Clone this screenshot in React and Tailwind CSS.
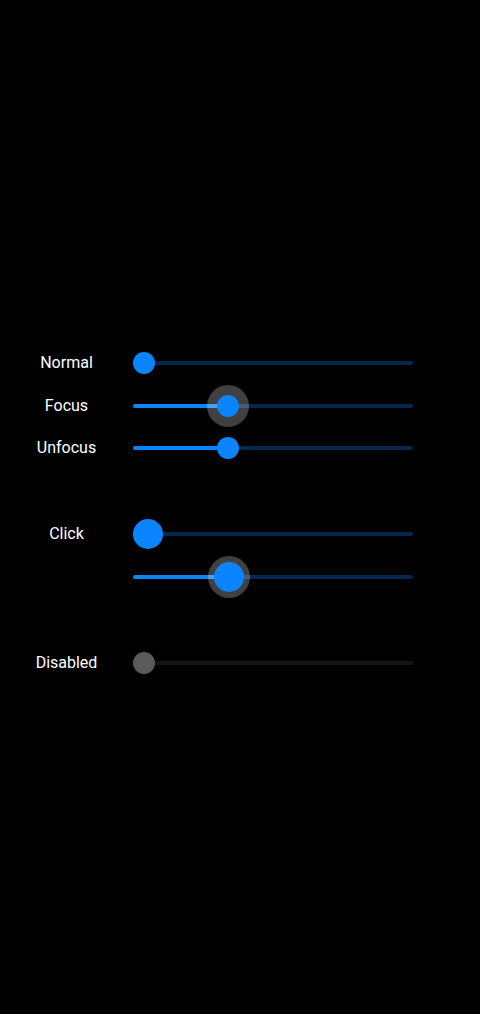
import React from 'react';

const TRACK_W = 280;

const Slider = ({ value = 0, size = 22, halo = false, disabled = false }) => {
  const r = size / 2;
  const center = r + value * (TRACK_W - size);

  return (
    <div className="relative w-[280px] h-full flex items-center">
      <div
        className={
          'absolute inset-x-0 h-1 rounded-full ' +
          (disabled ? 'bg-[#151515]' : 'bg-[#0a84ff]/30')
        }
      />
      {!disabled && value > 0 && (
        <div
          className="absolute left-0 h-1 rounded-full bg-[#0a84ff]"
          style={{ width: center }}
        />
      )}
      {halo && (
        <div
          className="absolute w-[42px] h-[42px] rounded-full bg-white/25"
          style={{ left: center - 21 }}
        />
      )}
      <div
        className={
          'absolute rounded-full ' + (disabled ? 'bg-[#5a5a5a]' : 'bg-[#0a84ff]')
        }
        style={{ width: size, height: size, left: center - r }}
      />
    </div>
  );
};

const Row = ({ label, children }) => (
  <div className="flex items-center h-[42.86px]">
    <div className="w-[133px] text-center text-white text-base">{label}</div>
    {children}
  </div>
);

const App = () => {
  return (
    <div
      className="w-[480px] h-[1014px] bg-black pt-[341.3px]"
      style={{ fontFamily: 'Roboto, "Noto Sans", sans-serif' }}
    >
      <Row label="Normal">
        <Slider value={0} />
      </Row>
      <Row label="Focus">
        <Slider value={0.325} halo />
      </Row>
      <Row label="Unfocus">
        <Slider value={0.325} />
      </Row>
      <div className="h-[42.86px]" />
      <Row label="Click">
        <Slider value={0} size={30} />
      </Row>
      <Row label="">
        <Slider value={0.325} size={30} halo />
      </Row>
      <div className="h-[42.86px]" />
      <Row label="Disabled">
        <Slider value={0} disabled />
      </Row>
    </div>
  );
};

export default App;
